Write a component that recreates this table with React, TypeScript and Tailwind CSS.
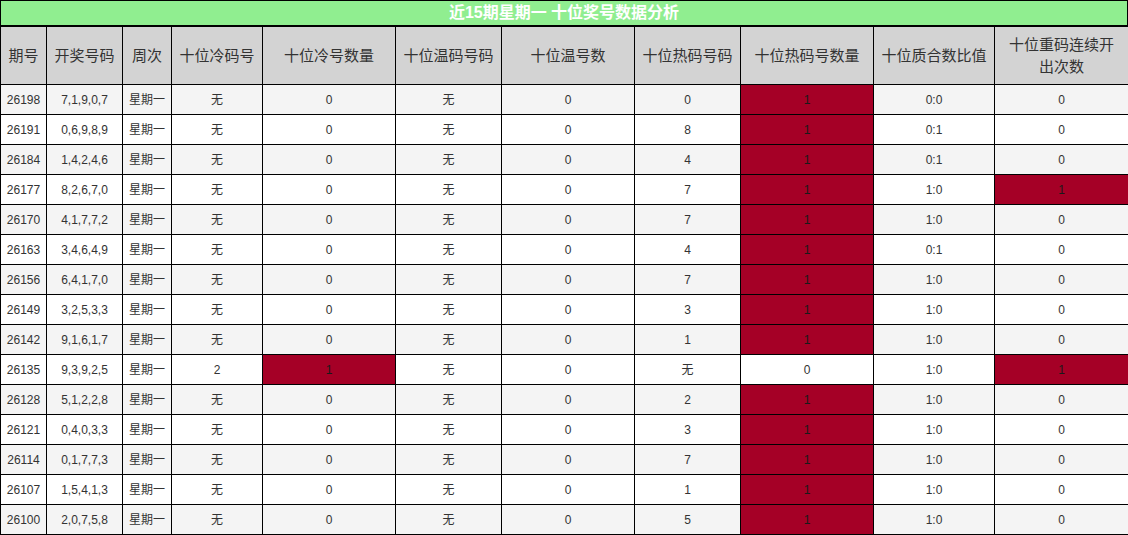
const rows: [string, string, string, string, string, string, string, string, string, string, string][] = [
  ["26198", "7,1,9,0,7", "星期一", "无", "0", "无", "0", "0", "1", "0:0", "0"],
  ["26191", "0,6,9,8,9", "星期一", "无", "0", "无", "0", "8", "1", "0:1", "0"],
  ["26184", "1,4,2,4,6", "星期一", "无", "0", "无", "0", "4", "1", "0:1", "0"],
  ["26177", "8,2,6,7,0", "星期一", "无", "0", "无", "0", "7", "1", "1:0", "1"],
  ["26170", "4,1,7,7,2", "星期一", "无", "0", "无", "0", "7", "1", "1:0", "0"],
  ["26163", "3,4,6,4,9", "星期一", "无", "0", "无", "0", "4", "1", "0:1", "0"],
  ["26156", "6,4,1,7,0", "星期一", "无", "0", "无", "0", "7", "1", "1:0", "0"],
  ["26149", "3,2,5,3,3", "星期一", "无", "0", "无", "0", "3", "1", "1:0", "0"],
  ["26142", "9,1,6,1,7", "星期一", "无", "0", "无", "0", "1", "1", "1:0", "0"],
  ["26135", "9,3,9,2,5", "星期一", "2", "1", "无", "0", "无", "0", "1:0", "1"],
  ["26128", "5,1,2,2,8", "星期一", "无", "0", "无", "0", "2", "1", "1:0", "0"],
  ["26121", "0,4,0,3,3", "星期一", "无", "0", "无", "0", "3", "1", "1:0", "0"],
  ["26114", "0,1,7,7,3", "星期一", "无", "0", "无", "0", "7", "1", "1:0", "0"],
  ["26107", "1,5,4,1,3", "星期一", "无", "0", "无", "0", "1", "1", "1:0", "0"],
  ["26100", "2,0,7,5,8", "星期一", "无", "0", "无", "0", "5", "1", "1:0", "0"],
];

const headers = [
  "期号",
  "开奖号码",
  "周次",
  "十位冷码号",
  "十位冷号数量",
  "十位温码号码",
  "十位温号数",
  "十位热码号码",
  "十位热码号数量",
  "十位质合数比值",
];

const widths = ["w-[46px]", "w-[76px]", "w-[49px]", "w-[91px]", "w-[133px]", "w-[106px]", "w-[133px]", "w-[106px]", "w-[133px]", "w-[121px]", "w-[134px]"];

// columns whose value "1" gets the red highlight
const hot = [4, 8, 10];

export default function App() {
  return (
    <div className="w-[1128px] h-[535px] bg-white font-['Liberation_Sans','Noto_Sans_CJK_SC',sans-serif] text-[#333]">
      <div className="h-[26px] border border-black bg-[#90ee90] flex items-center justify-center text-white text-base font-bold">
        近15期星期一 十位奖号数据分析
      </div>
      <table className="w-[1128px] table-fixed border-collapse">
        <colgroup>
          {widths.map((w, i) => (
            <col key={i} className={w} />
          ))}
        </colgroup>
        <thead>
          <tr className="h-[58px] bg-[#d3d3d3]">
            {headers.map((h, i) => (
              <th key={i} className="border border-black font-normal text-[15px] leading-[22px] text-[#333] px-0 whitespace-nowrap">
                {h}
              </th>
            ))}
            <th className="border border-black font-normal text-[15px] leading-[22px] text-[#333] px-0">
              十位重码连续开
              <br />
              出次数
            </th>
          </tr>
        </thead>
        <tbody>
          {rows.map((r, ri) => (
            <tr key={ri} className={`h-[30px] ${ri % 2 === 0 ? "bg-[#f4f4f4]" : "bg-white"}`}>
              {r.map((c, ci) => (
                <td
                  key={ci}
                  className={`border border-black text-xs text-center p-0 ${
                    hot.includes(ci) && c === "1" ? "bg-[#a50026] text-[#1a1a1a]" : ""
                  }`}
                >
                  {c}
                </td>
              ))}
            </tr>
          ))}
        </tbody>
      </table>
    </div>
  );
}
